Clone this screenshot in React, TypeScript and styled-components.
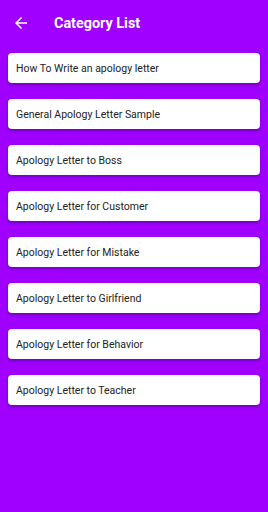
import React from "react";
import styled, { createGlobalStyle } from "styled-components";

const Global = createGlobalStyle`
  html, body { margin: 0; padding: 0; background: #a000ff; }
  body { font-family: Roboto, "Noto Sans", sans-serif; }
  * { box-sizing: border-box; }
`;

const Screen = styled.div`
  width: 268px;
  height: 512px;
  background: #a000ff;
  display: flex;
  flex-direction: column;
  overflow: hidden;
`;

const Toolbar = styled.header`
  height: 45px;
  display: flex;
  align-items: center;
  padding-left: 12px;
  padding-top: 1px;
  color: #fff;
`;

const BackButton = styled.div`
  width: 18px;
  height: 18px;
  display: flex;
  align-items: center;
  justify-content: center;
  margin-right: 24px;
`;

const Title = styled.h1`
  margin: 0;
  font-size: 14.4px;
  font-weight: 700;
  color: #fff;
`;

const List = styled.div`
  display: flex;
  flex-direction: column;
  gap: 16px;
  padding: 8px 8px 0 8px;
`;

const Card = styled.div`
  height: 30px;
  background: #fff;
  border-radius: 4px;
  box-shadow: 0 2px 3px rgba(60, 0, 110, 0.45);
  display: flex;
  align-items: center;
  padding-left: 8px;
  font-size: 10.5px;
  color: #222;
`;

const items = [
  "How To Write an apology letter",
  "General Apology Letter Sample",
  "Apology Letter to Boss",
  "Apology Letter for Customer",
  "Apology Letter for Mistake",
  "Apology Letter to Girlfriend",
  "Apology Letter for Behavior",
  "Apology Letter to Teacher",
];

export default function App() {
  return (
    <>
      <Global />
      <Screen>
        <Toolbar>
          <BackButton>
            <svg width="18" height="18" viewBox="0 0 24 24">
              <path
                d="M20 11H7.83l5.59-5.59L12 4l-8 8 8 8 1.41-1.41L7.83 13H20v-2z"
                fill="#fff"
              />
            </svg>
          </BackButton>
          <Title>Category List</Title>
        </Toolbar>
        <List>
          {items.map((t) => (
            <Card key={t}>{t}</Card>
          ))}
        </List>
      </Screen>
    </>
  );
}
